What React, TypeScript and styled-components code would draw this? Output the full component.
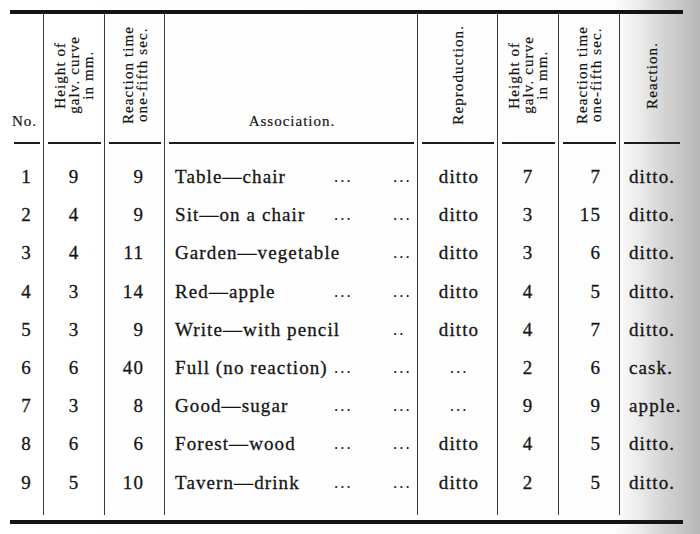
import { styled, createGlobalStyle } from 'styled-components';

const GlobalStyle = createGlobalStyle`
  html, body {
    margin: 0;
    padding: 0;
  }
  body {
    width: 700px;
    height: 534px;
    overflow: hidden;
    background: linear-gradient(
      to right,
      #ffffff 0,
      #fdfdfd 615px,
      #ececec 638px,
      #d6d6d6 662px,
      #c2c2c2 686px,
      #b6b6b6 700px
    );
    color: #151515;
    font-family: 'Liberation Serif', 'DejaVu Serif', serif;
  }
`;

const COLUMNS = '33px 61px 60px 253px 80px 61px 61px 64px';

type Align = 'left' | 'center' | 'right';

interface Row {
  no: number;
  height: number;
  time: number;
  word: string;
  firstDots: string;
  lastDots: string;
  reproduction: string;
  height2: number;
  time2: number;
  reaction: string;
}

const rows: Row[] = [
  { no: 1, height: 9, time: 9, word: 'Table—chair', firstDots: '...', lastDots: '...', reproduction: 'ditto', height2: 7, time2: 7, reaction: 'ditto.' },
  { no: 2, height: 4, time: 9, word: 'Sit—on a chair', firstDots: '...', lastDots: '...', reproduction: 'ditto', height2: 3, time2: 15, reaction: 'ditto.' },
  { no: 3, height: 4, time: 11, word: 'Garden—vegetable', firstDots: '', lastDots: '...', reproduction: 'ditto', height2: 3, time2: 6, reaction: 'ditto.' },
  { no: 4, height: 3, time: 14, word: 'Red—apple', firstDots: '...', lastDots: '...', reproduction: 'ditto', height2: 4, time2: 5, reaction: 'ditto.' },
  { no: 5, height: 3, time: 9, word: 'Write—with pencil', firstDots: '', lastDots: '..', reproduction: 'ditto', height2: 4, time2: 7, reaction: 'ditto.' },
  { no: 6, height: 6, time: 40, word: 'Full (no reaction)', firstDots: '...', lastDots: '...', reproduction: '...', height2: 2, time2: 6, reaction: 'cask.' },
  { no: 7, height: 3, time: 8, word: 'Good—sugar', firstDots: '...', lastDots: '...', reproduction: '...', height2: 9, time2: 9, reaction: 'apple.' },
  { no: 8, height: 6, time: 6, word: 'Forest—wood', firstDots: '...', lastDots: '...', reproduction: 'ditto', height2: 4, time2: 5, reaction: 'ditto.' },
  { no: 9, height: 5, time: 10, word: 'Tavern—drink', firstDots: '...', lastDots: '...', reproduction: 'ditto', height2: 2, time2: 5, reaction: 'ditto.' },
];

const App = () => {
  return (
    <>
      <GlobalStyle />
      <PageS>
        <ThickRuleS />
        <TableS>
          <HeaderRowS>
            <HeaderCellS $flat>No.</HeaderCellS>
            <HeaderCellS $ruled>
              <SidewaysS>
                Height of
                <br />
                galv. curve
                <br />
                in mm.
              </SidewaysS>
            </HeaderCellS>
            <HeaderCellS $ruled>
              <SidewaysS>
                Reaction time
                <br />
                one-fifth sec.
              </SidewaysS>
            </HeaderCellS>
            <HeaderCellS $ruled $flat $centered>
              Association.
            </HeaderCellS>
            <HeaderCellS $ruled>
              <SidewaysS>Reproduction.</SidewaysS>
            </HeaderCellS>
            <HeaderCellS $ruled>
              <SidewaysS>
                Height of
                <br />
                galv. curve
                <br />
                in mm.
              </SidewaysS>
            </HeaderCellS>
            <HeaderCellS $ruled>
              <SidewaysS>
                Reaction time
                <br />
                one-fifth sec.
              </SidewaysS>
            </HeaderCellS>
            <HeaderCellS $ruled>
              <SidewaysS>Reaction.</SidewaysS>
            </HeaderCellS>
          </HeaderRowS>

          <RuleRowS>
            {Array.from({ length: 8 }).map((_, i) => (
              <RuleCellS key={i} $ruled={i > 0}>
                <SegmentS />
              </RuleCellS>
            ))}
          </RuleRowS>

          <SpacerRowS $height={14}>
            {Array.from({ length: 8 }).map((_, i) => (
              <SpacerCellS key={i} $ruled={i > 0} />
            ))}
          </SpacerRowS>

          {rows.map((row) => (
            <BodyRowS key={row.no}>
              <CellS $align='center'>{row.no}</CellS>
              <CellS $ruled $align='center'>
                {row.height}
              </CellS>
              <CellS $ruled $align='right' $pad={20}>
                {row.time}
              </CellS>
              <AssociationCellS>
                <WordS>{row.word}</WordS>
                {row.firstDots && <DotsS $col={2}>{row.firstDots}</DotsS>}
                {row.lastDots && <DotsS $col={4}>{row.lastDots}</DotsS>}
              </AssociationCellS>
              <CellS $ruled $align='center' $pad={3}>
                {row.reproduction === '...' ? <DotsS $col={1}>...</DotsS> : row.reproduction}
              </CellS>
              <CellS $ruled $align='center'>
                {row.height2}
              </CellS>
              <CellS $ruled $align='right' $pad={18}>
                {row.time2}
              </CellS>
              <CellS $ruled $align='left' $pad={9}>
                {row.reaction}
              </CellS>
            </BodyRowS>
          ))}

          <SpacerRowS $height={13}>
            {Array.from({ length: 8 }).map((_, i) => (
              <SpacerCellS key={i} $ruled={i > 0} />
            ))}
          </SpacerRowS>
        </TableS>
        <ThickRuleS $bottom />
      </PageS>
    </>
  );
};

export default App;

const PageS = styled.div`
  padding: 10px 0 0 10px;
  width: 673px;
`;

const ThickRuleS = styled.div<{ $bottom?: boolean }>`
  height: 4px;
  margin-top: ${({ $bottom }) => ($bottom ? '5px' : '0')};
  background: #141414;
`;

const TableS = styled.div`
  display: flex;
  flex-direction: column;
`;

const RowBase = styled.div`
  display: grid;
  grid-template-columns: ${COLUMNS};
`;

const HeaderRowS = styled(RowBase)`
  height: 128px;
`;

const HeaderCellS = styled.div<{ $ruled?: boolean; $flat?: boolean; $centered?: boolean }>`
  display: flex;
  align-items: ${({ $flat }) => ($flat ? 'flex-end' : 'center')};
  justify-content: ${({ $flat, $centered }) => ($flat && !$centered ? 'flex-start' : 'center')};
  padding: ${({ $flat }) => ($flat ? '0 0 13px 2px' : '0 0 6px 0')};
  box-sizing: border-box;
  border-left: ${({ $ruled }) => ($ruled ? '1px solid #3a3a3a' : 'none')};
  font-size: 15px;
  letter-spacing: 1px;
  line-height: 1;
  -webkit-text-stroke: 0.2px #151515;
`;

const SidewaysS = styled.div`
  writing-mode: vertical-rl;
  transform: rotate(180deg);
  text-align: center;
  font-size: 15px;
  letter-spacing: 1.1px;
  line-height: 14px;
  white-space: nowrap;
`;

const RuleRowS = styled(RowBase)`
  height: 2px;
`;

const RuleCellS = styled.div<{ $ruled?: boolean }>`
  border-left: ${({ $ruled }) => ($ruled ? '1px solid #3a3a3a' : 'none')};
  display: flex;
`;

const SegmentS = styled.div`
  flex: 1;
  margin: 0 3px 0 4px;
  background: #1c1c1c;
`;

const SpacerRowS = styled(RowBase)<{ $height: number }>`
  height: ${({ $height }) => $height}px;
`;

const SpacerCellS = styled.div<{ $ruled?: boolean }>`
  border-left: ${({ $ruled }) => ($ruled ? '1px solid #3a3a3a' : 'none')};
`;

const BodyRowS = styled(RowBase)`
  height: 38.2px;
  font-size: 19px;
  letter-spacing: 1.1px;
  -webkit-text-stroke: 0.3px #151515;
`;

const CellS = styled.div<{ $ruled?: boolean; $align: Align; $pad?: number }>`
  display: flex;
  align-items: center;
  justify-content: ${({ $align }) =>
    $align === 'left' ? 'flex-start' : $align === 'right' ? 'flex-end' : 'center'};
  box-sizing: border-box;
  padding-left: ${({ $align, $pad }) => ($align === 'right' ? 0 : $pad ?? 0)}px;
  padding-right: ${({ $align, $pad }) => ($align === 'right' ? $pad ?? 0 : 0)}px;
  border-left: ${({ $ruled }) => ($ruled ? '1px solid #3a3a3a' : 'none')};
  white-space: nowrap;
`;

const AssociationCellS = styled.div`
  display: grid;
  grid-template-columns: 159px 18px 41px 16px;
  align-items: center;
  padding: 0 9px 0 10px;
  border-left: 1px solid #3a3a3a;
  white-space: nowrap;
`;

const WordS = styled.span`
  grid-column: 1;
  grid-row: 1;
`;

const DotsS = styled.span<{ $col: number }>`
  grid-column: ${({ $col }) => $col};
  grid-row: 1;
  font-size: 17px;
  letter-spacing: 2px;
  -webkit-text-stroke: 0;
`;
